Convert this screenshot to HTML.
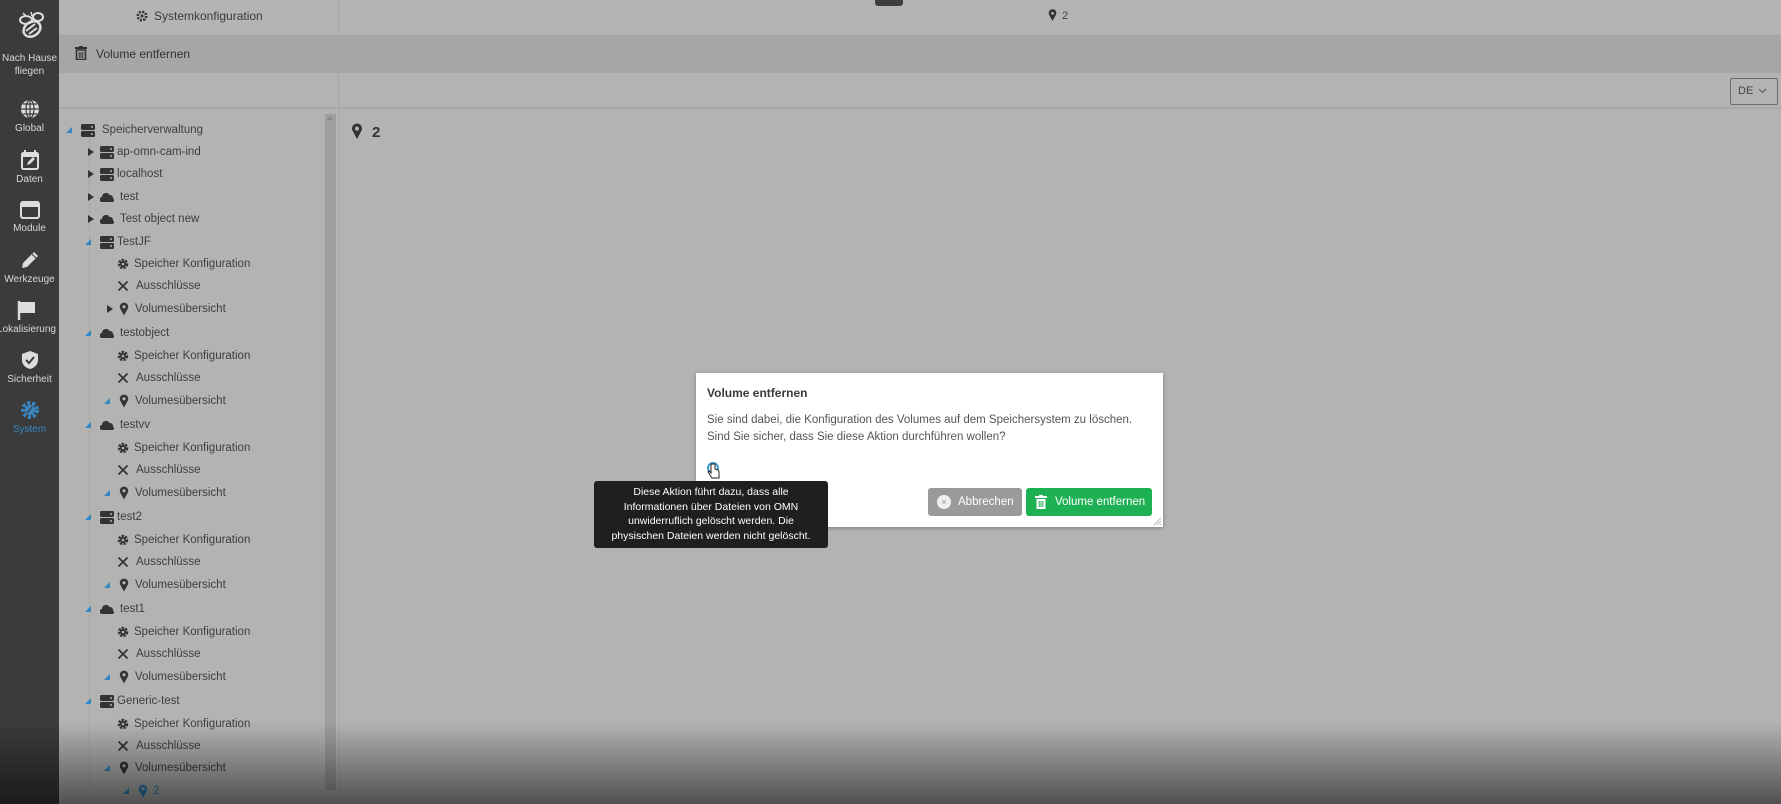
<!DOCTYPE html>
<html><head><meta charset="utf-8"><style>
*{margin:0;padding:0;box-sizing:border-box}
body{width:1781px;height:804px;overflow:hidden;background:#b3b3b2;font-family:"Liberation Sans",sans-serif;position:relative}
.a{position:absolute}
.sb{left:0;top:0;width:59px;height:804px;background:#3b3b3b}
.si{position:absolute;left:0;width:59px;text-align:center;color:#d8d8d8;font-size:10px;line-height:13px}
.si svg{display:block;margin:0 auto 3px}
.row{position:absolute;height:20px;line-height:20px;font-size:11.5px;color:#3e3e3e;white-space:nowrap}
.row svg{position:absolute;top:3px}
.row span{position:absolute;top:0}
.tc{position:absolute;top:6px;width:0;height:0;border-top:4px solid transparent;border-bottom:4px solid transparent;border-left:6px solid #333}
.to{position:absolute;top:7px;width:0;height:0;border-left:6px solid transparent;border-bottom:6px solid #2f86c2}
</style></head><body>
<div class="a" style="left:59px;top:0;width:1722px;height:35px;background:#b4b4b3"></div>
<div class="a" style="left:59px;top:35px;width:1722px;height:38px;background:#a6a6a4"></div>
<div class="a" style="left:59px;top:73px;width:1722px;height:36px;background:#b3b3b2;border-bottom:2px solid #a9a9a8"></div>
<div class="a" style="left:338px;top:0;width:1px;height:109px;background:#a8a8a7"></div>
<div class="a" style="left:338px;top:109px;width:2px;height:695px;background:#adadac"></div>
<div class="a" style="left:875px;top:0;width:28px;height:6px;background:#3d3d3d;border-radius:0 0 3px 3px"></div>
<div class="a" style="left:136px;top:8px;font-size:12px;color:#3a3a3a;line-height:16px">
<svg width="12" height="12" viewBox="0 0 12 12" style="vertical-align:-2px;margin-right:6px"><circle cx="6" cy="6" r="4.2" fill="none" stroke="#333" stroke-width="2.6" stroke-dasharray="2 1.3"/><circle cx="6" cy="6" r="1.5" fill="#333"/></svg>Systemkonfiguration</div>
<div class="a" style="left:75px;top:46px;font-size:12px;color:#333;line-height:16px">
<svg width="12" height="14" viewBox="0 0 12 14" style="vertical-align:-2px;margin-right:9px"><rect x="0" y="1" width="12" height="2" fill="#333"/><rect x="4" y="0" width="4" height="2" fill="#333"/><path d="M1.5 4h9v9.5h-9z" fill="none" stroke="#333" stroke-width="1.6"/><path d="M4.2 6v6M6 6v6M7.8 6v6" stroke="#333" stroke-width="1"/></svg>Volume entfernen</div>
<div class="a" style="left:1048px;top:8px;font-size:11px;color:#444;line-height:16px">
<svg width="9" height="12" viewBox="0 0 9 12" style="vertical-align:-2px;margin-right:5px"><path d="M4.5 12L1 5.5A3.8 3.8 0 1 1 8 5.5z" fill="#333"/><circle cx="4.5" cy="4.3" r="1.4" fill="#b4b4b3"/></svg>2</div>
<div class="a" style="left:1730px;top:78px;width:48px;height:27px;border:1px solid #6a6a6a;border-radius:2px;font-size:11px;color:#444;line-height:25px;padding-left:7px">DE <svg width="9" height="6" viewBox="0 0 9 6" style="margin-left:2px"><path d="M1 1l3.5 3.5L8 1" stroke="#555" fill="none" stroke-width="1.1"/></svg></div>
<div class="a" style="left:351px;top:123px;font-size:15px;font-weight:bold;color:#333;line-height:18px">
<svg width="12" height="16" viewBox="0 0 12 16" style="vertical-align:-2px;margin-right:9px"><path d="M6 16L1.3 7.3A5 5 0 1 1 10.7 7.3z" fill="#333"/><circle cx="6" cy="5.6" r="2" fill="#b3b3b2"/></svg>2</div>

<div class="a" style="left:325px;top:114px;width:11px;height:676px;background:#9e9e9d"></div>
<div class="a" style="left:327px;top:116px;width:0;height:0;border-left:3px solid transparent;border-right:3px solid transparent;border-bottom:4px solid #8a8a8a"></div>

<div class="a sb"></div>
<div class="si" style="top:10px"><svg width="36" height="34" viewBox="0 0 36 34"><ellipse cx="20" cy="19" rx="9" ry="7" transform="rotate(-35 20 19)" fill="none" stroke="#ddd" stroke-width="2.5"/><path d="M14 21l9-7M17 24l8-6" stroke="#ddd" stroke-width="2"/><ellipse cx="14" cy="10" rx="6" ry="4" fill="none" stroke="#ddd" stroke-width="2"/><ellipse cx="26" cy="7" rx="5" ry="4" fill="none" stroke="#ddd" stroke-width="2"/><path d="M11 3l3 3M19 2l1 4" stroke="#ddd" stroke-width="1.5"/></svg></div>
<div class="si" style="top:52px">Nach Hause<br>fliegen</div>
<div class="si" style="top:99px"><svg width="20" height="20" viewBox="0 0 20 20"><circle cx="10" cy="10" r="9" fill="#ddd"/><path d="M1 10h18M10 1v18M3 5h14M3 15h14" stroke="#3b3b3b" stroke-width="1.2"/><ellipse cx="10" cy="10" rx="4" ry="9" fill="none" stroke="#3b3b3b" stroke-width="1.2"/></svg>Global</div>
<div class="si" style="top:150px"><svg width="18" height="20" viewBox="0 0 18 20"><rect x="1" y="3" width="16" height="16" rx="1.5" fill="none" stroke="#ddd" stroke-width="2"/><rect x="1" y="3" width="16" height="4" fill="#ddd"/><path d="M4 0v4M14 0v4" stroke="#ddd" stroke-width="2"/><path d="M6 15l1-3 5-5 2 2-5 5z" fill="#ddd"/></svg>Daten</div>
<div class="si" style="top:201px"><svg width="20" height="18" viewBox="0 0 20 18"><rect x="1" y="1" width="18" height="16" rx="2" fill="none" stroke="#ddd" stroke-width="2"/><rect x="1" y="1" width="18" height="5" fill="#ddd"/></svg>Module</div>
<div class="si" style="top:250px"><svg width="20" height="20" viewBox="0 0 20 20"><path d="M2 18l1-5L14 2l4 4L7 17z" fill="#ddd"/><path d="M12 4l4 4" stroke="#3b3b3b" stroke-width="1.2"/></svg>Werkzeuge</div>
<div class="si" style="top:300px;left:-3px"><svg width="20" height="20" viewBox="0 0 20 20"><path d="M2 1v19" stroke="#ddd" stroke-width="2.5"/><path d="M3 2h15v11H3z" fill="#ddd"/></svg>Lokalisierung</div>
<div class="si" style="top:350px"><svg width="20" height="20" viewBox="0 0 20 20"><path d="M10 1l8 3v6c0 5-4 8-8 9-4-1-8-4-8-9V4z" fill="#ddd"/><path d="M6 10l3 3 5-6" stroke="#3b3b3b" stroke-width="2" fill="none"/></svg>Sicherheit</div>
<div class="si" style="top:400px;color:#3a86c0"><svg width="20" height="20" viewBox="0 0 20 20"><circle cx="10" cy="10" r="7" fill="none" stroke="#3a86c0" stroke-width="4" stroke-dasharray="3 2"/><circle cx="10" cy="10" r="5" fill="#3a86c0"/><path d="M7 13l5-6" stroke="#3b3b3b" stroke-width="1.3"/></svg>System</div>

<svg width="0" height="0" style="position:absolute"><defs>
<g id="srv"><rect x="0" y="1" width="14" height="6" rx="1.5" fill="#333"/><rect x="0" y="8" width="14" height="6" rx="1.5" fill="#333"/><circle cx="11" cy="4" r="1" fill="#b3b3b2"/><circle cx="11" cy="11" r="1" fill="#b3b3b2"/></g>
<g id="cld"><path d="M2 12a2.5 2.5 0 0 1 0-5 4 4 0 0 1 7.5-2 3 3 0 0 1 3.5 3.5 2 2 0 0 1 0 3.5z" fill="#333"/></g>
<g id="gear"><circle cx="6" cy="7" r="3.8" fill="none" stroke="#333" stroke-width="2.8" stroke-dasharray="2.2 1.1"/><circle cx="6" cy="7" r="3" fill="#333"/><circle cx="6" cy="7" r="1.3" fill="#b3b3b2"/></g>
<g id="x"><path d="M1.5 2.5l9 9M10.5 2.5l-9 9" stroke="#333" stroke-width="1.8"/></g>
<g id="pin"><path d="M5 13.5L1.2 6.6A4.2 4.2 0 1 1 8.8 6.6z" fill="#333"/><circle cx="5" cy="4.8" r="1.6" fill="#b3b3b2"/></g>
<g id="pinb"><path d="M5 13.5L1.2 6.6A4.2 4.2 0 1 1 8.8 6.6z" fill="#2f7fb5"/><circle cx="5" cy="4.8" r="1.6" fill="#b3b3b2"/></g>
</defs></svg>

<div class="a" style="left:89px;top:140px;width:0;height:650px;border-left:1px dotted #9a9a9a"></div>

<div class="row" style="top:120px;left:0"><i class="to" style="left:66px"></i><svg style="left:81px" width="14" height="15"><use href="#srv"/></svg><span style="left:102px">Speicherverwaltung</span></div>
<div class="row" style="top:142px"><i class="tc" style="left:88px"></i><svg style="left:100px" width="14" height="15"><use href="#srv"/></svg><span style="left:117px">ap-omn-cam-ind</span></div>
<div class="row" style="top:164px"><i class="tc" style="left:88px"></i><svg style="left:100px" width="14" height="15"><use href="#srv"/></svg><span style="left:117px">localhost</span></div>
<div class="row" style="top:187px"><i class="tc" style="left:88px"></i><svg style="left:100px" width="14" height="15"><use href="#cld"/></svg><span style="left:120px">test</span></div>
<div class="row" style="top:209px"><i class="tc" style="left:88px"></i><svg style="left:100px" width="14" height="15"><use href="#cld"/></svg><span style="left:120px">Test object new</span></div>
<div class="row" style="top:232px"><i class="to" style="left:85px"></i><svg style="left:100px" width="14" height="15"><use href="#srv"/></svg><span style="left:117px">TestJF</span></div>
<div class="row" style="top:254px"><svg style="left:117px" width="12" height="14"><use href="#gear"/></svg><span style="left:134px">Speicher Konfiguration</span></div>
<div class="row" style="top:276px"><svg style="left:117px" width="12" height="14"><use href="#x"/></svg><span style="left:136px">Ausschlüsse</span></div>
<div class="row" style="top:299px"><i class="tc" style="left:107px"></i><svg style="left:119px" width="10" height="14"><use href="#pin"/></svg><span style="left:135px">Volumesübersicht</span></div>
<div class="row" style="top:323px"><i class="to" style="left:85px"></i><svg style="left:100px" width="14" height="15"><use href="#cld"/></svg><span style="left:120px">testobject</span></div>
<div class="row" style="top:346px"><svg style="left:117px" width="12" height="14"><use href="#gear"/></svg><span style="left:134px">Speicher Konfiguration</span></div>
<div class="row" style="top:368px"><svg style="left:117px" width="12" height="14"><use href="#x"/></svg><span style="left:136px">Ausschlüsse</span></div>
<div class="row" style="top:391px"><i class="to" style="left:104px"></i><svg style="left:119px" width="10" height="14"><use href="#pin"/></svg><span style="left:135px">Volumesübersicht</span></div>
<div class="row" style="top:415px"><i class="to" style="left:85px"></i><svg style="left:100px" width="14" height="15"><use href="#cld"/></svg><span style="left:120px">testvv</span></div>
<div class="row" style="top:438px"><svg style="left:117px" width="12" height="14"><use href="#gear"/></svg><span style="left:134px">Speicher Konfiguration</span></div>
<div class="row" style="top:460px"><svg style="left:117px" width="12" height="14"><use href="#x"/></svg><span style="left:136px">Ausschlüsse</span></div>
<div class="row" style="top:483px"><i class="to" style="left:104px"></i><svg style="left:119px" width="10" height="14"><use href="#pin"/></svg><span style="left:135px">Volumesübersicht</span></div>
<div class="row" style="top:507px"><i class="to" style="left:85px"></i><svg style="left:100px" width="14" height="15"><use href="#srv"/></svg><span style="left:117px">test2</span></div>
<div class="row" style="top:530px"><svg style="left:117px" width="12" height="14"><use href="#gear"/></svg><span style="left:134px">Speicher Konfiguration</span></div>
<div class="row" style="top:552px"><svg style="left:117px" width="12" height="14"><use href="#x"/></svg><span style="left:136px">Ausschlüsse</span></div>
<div class="row" style="top:575px"><i class="to" style="left:104px"></i><svg style="left:119px" width="10" height="14"><use href="#pin"/></svg><span style="left:135px">Volumesübersicht</span></div>
<div class="row" style="top:599px"><i class="to" style="left:85px"></i><svg style="left:100px" width="14" height="15"><use href="#cld"/></svg><span style="left:120px">test1</span></div>
<div class="row" style="top:622px"><svg style="left:117px" width="12" height="14"><use href="#gear"/></svg><span style="left:134px">Speicher Konfiguration</span></div>
<div class="row" style="top:644px"><svg style="left:117px" width="12" height="14"><use href="#x"/></svg><span style="left:136px">Ausschlüsse</span></div>
<div class="row" style="top:667px"><i class="to" style="left:104px"></i><svg style="left:119px" width="10" height="14"><use href="#pin"/></svg><span style="left:135px">Volumesübersicht</span></div>
<div class="row" style="top:691px"><i class="to" style="left:85px"></i><svg style="left:100px" width="14" height="15"><use href="#srv"/></svg><span style="left:117px">Generic-test</span></div>
<div class="row" style="top:714px"><svg style="left:117px" width="12" height="14"><use href="#gear"/></svg><span style="left:134px">Speicher Konfiguration</span></div>
<div class="row" style="top:736px"><svg style="left:117px" width="12" height="14"><use href="#x"/></svg><span style="left:136px">Ausschlüsse</span></div>
<div class="row" style="top:758px"><i class="to" style="left:104px"></i><svg style="left:119px" width="10" height="14"><use href="#pin"/></svg><span style="left:135px">Volumesübersicht</span></div>
<div class="row" style="top:781px;color:#2f7fb5"><i class="to" style="left:123px"></i><svg style="left:138px" width="10" height="14"><use href="#pinb"/></svg><span style="left:153px">2</span></div>

<div class="a" style="left:696px;top:373px;width:467px;height:154px;background:#fff;box-shadow:0 1px 4px rgba(0,0,0,.3)">
<div class="a" style="left:11px;top:13px;font-size:12px;font-weight:bold;color:#3a3a3a">Volume entfernen</div>
<div class="a" style="left:11px;top:39px;font-size:11.5px;color:#555;line-height:17px">Sie sind dabei, die Konfiguration des Volumes auf dem Speichersystem zu löschen.<br>Sind Sie sicher, dass Sie diese Aktion durchführen wollen?</div>
<div class="a" style="left:11px;top:89px;width:12px;height:12px;border:2px solid #3a9ad6;border-radius:50%"></div>
<div class="a" style="left:232px;top:115px;width:94px;height:28px;background:#9a9a9a;border-radius:3px;color:#fff;font-size:11.5px;line-height:28px;padding-left:30px"><span class="a" style="left:9px;top:7px;width:14px;height:14px;border-radius:50%;background:#eee;color:#999;font-size:9px;line-height:14px;text-align:center">×</span>Abbrechen</div>
<div class="a" style="left:330px;top:115px;width:126px;height:28px;background:#1eb154;border-radius:3px;color:#fff;font-size:11.5px;line-height:28px;padding-left:29px"><svg class="a" style="left:9px;top:7px" width="12" height="14" viewBox="0 0 12 14"><rect x="0" y="1" width="12" height="2" fill="#fff"/><rect x="4" y="0" width="4" height="2" fill="#fff"/><rect x="1.5" y="4" width="9" height="10" fill="#fff"/><path d="M4.2 6v6M6 6v6M7.8 6v6" stroke="#1eb154" stroke-width="1"/></svg>Volume entfernen</div>
<svg class="a" style="right:1px;bottom:1px" width="9" height="9"><path d="M8 1L1 8M8 4L4 8M8 7L7 8" stroke="#bbb"/></svg>
</div>
<div class="a" style="left:594px;top:481px;width:234px;height:67px;background:#1f1f1f;border-radius:3px;color:#fff;font-size:10.5px;line-height:14.5px;text-align:center;padding-top:4px">Diese Aktion führt dazu, dass alle<br>Informationen über Dateien von OMN<br>unwiderruflich gelöscht werden. Die<br>physischen Dateien werden nicht gelöscht.</div>
<svg class="a" style="left:707px;top:462px" width="14" height="18" viewBox="0 0 14 18"><path d="M4 2v9l-2-2-1 1 4 6h7v-6l-1-2-3-1V2z" fill="#fff" stroke="#222" stroke-width="1"/></svg>
<div class="a" style="left:0;top:722px;width:1781px;height:82px;background:linear-gradient(rgba(0,0,0,0),rgba(0,0,0,.55))"></div>
</body></html>
